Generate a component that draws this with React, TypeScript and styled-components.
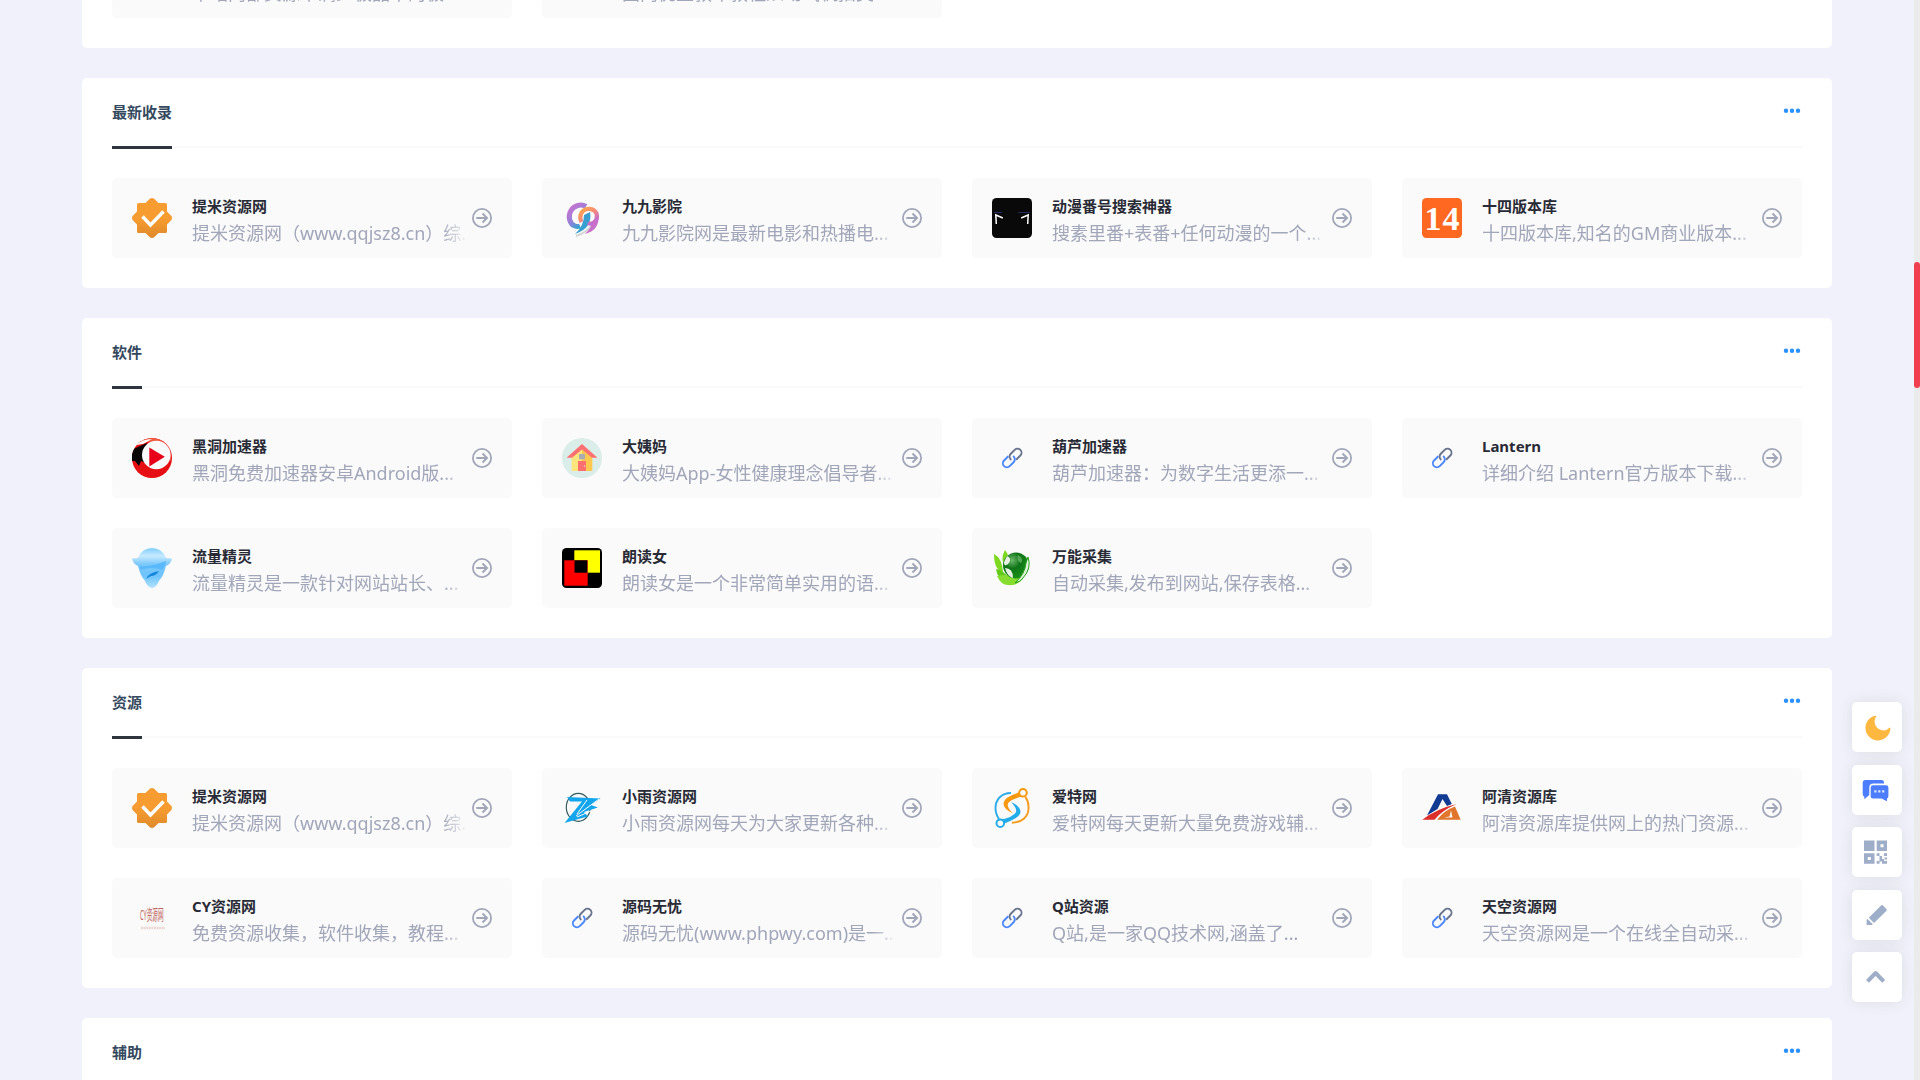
import React from "react";
import styled, { createGlobalStyle } from "styled-components";

const GlobalStyle = createGlobalStyle`
  * { box-sizing: border-box; }
  body {
    margin: 0;
    background: #f0f1fa;
    font-family: "Noto Sans", "Noto Sans CJK SC", sans-serif;
  }
`;

const Page = styled.div`
  display: flex;
  height: 1080px;
  overflow: hidden;
  background: #f0f1fa;
`;

const Main = styled.main`
  display: flex;
  flex-direction: column;
  gap: 30px;
  width: 1750px;
  margin-left: 82px;
`;

const Panel = styled.section`
  flex: none;
  padding: 0 30px 30px;
  border-radius: 5px;
  background: #fff;
`;

const ScrolledPanel = styled(Panel)`
  display: flex;
  flex-direction: column;
  justify-content: flex-end;
  height: 48px;
  border-radius: 0 0 5px 5px;
  overflow: hidden;
`;

const Header = styled.header`
  display: flex;
  justify-content: space-between;
  height: 70px;
  margin-bottom: 30px;
  border-bottom: 2px solid #fafafa;
`;

const Heading = styled.h2`
  height: 71px;
  margin: 0;
  border-bottom: 3px solid #2f353f;
  color: #34495e;
  font-size: 15px;
  font-weight: 700;
  line-height: 69px;
`;

const MoreLink = styled.a`
  display: flex;
  align-items: center;
  height: 65px;
  padding-right: 1px;
`;

const Grid = styled.div`
  display: grid;
  flex: none;
  grid-template-columns: repeat(4, 400px);
  gap: 30px;
`;

const Card = styled.article`
  display: flex;
  align-items: center;
  height: 80px;
  padding: 0 20px;
  border-radius: 5px;
  background: #fafafa;
`;

const Logo = styled.svg`
  flex: none;
  width: 40px;
  height: 40px;
`;

const Info = styled.div`
  flex: none;
  width: 280px;
  height: 80px;
  margin-left: 20px;
  padding-top: 18px;
`;

const Name = styled.h3`
  height: 20px;
  margin: 0;
  color: #282a35;
  font-size: 15px;
  font-weight: 700;
  line-height: 20px;
  white-space: nowrap;
`;

const Description = styled.p`
  height: 28px;
  margin: 3px 0 0;
  color: #a1a6b9;
  font-size: 18px;
  font-weight: 400;
  line-height: 28px;
  white-space: nowrap;
  mask-image: linear-gradient(90deg, #000 250px, transparent 275px);
`;

const Arrow = styled.svg`
  flex: none;
  width: 20px;
  height: 20px;
`;

const Tools = styled.nav`
  display: flex;
  flex-direction: column;
  gap: 12.5px;
  margin: 702px 0 0 20px;
`;

const ToolButton = styled.button`
  width: 50px;
  height: 50px;
  padding: 0;
  border: 0;
  border-radius: 5px;
  background: #fff;
  box-shadow: 0 0 15px rgba(60, 60, 40, 0.1);

  svg {
    display: block;
    width: 50px;
    height: 50px;
  }
`;

const ScrollTrack = styled.div`
  width: 6px;
  height: 1080px;
  margin-left: auto;
  padding-top: 262px;
  background: #ebebeb;
`;

const ScrollThumb = styled.div`
  height: 126px;
  border-radius: 3px;
  background: #f04050;
`;

const logos: Record<string, React.ReactNode> = {
  badge: (
    <>
      <defs>
        <linearGradient id="amber" x1="0" y1="0" x2="0" y2="1">
          <stop offset="0.5" stopColor="#f79c30" />
          <stop offset="1" stopColor="#de8a2b" />
        </linearGradient>
      </defs>
      <path
        fill="url(#amber)"
        d="M17.8 0.8Q20-0.8 22.2 0.8L26.5 5H33.5Q35 5 35 6.5V13.5L39.2 17.8Q40.8 20 39.2 22.2L35 26.5V33.5Q35 35 33.5 35H26.5L22.2 39.2Q20 40.8 17.8 39.2L13.5 35H6.5Q5 35 5 33.5V26.5L.8 22.2Q-.8 20 .8 17.8L5 13.5V6.5Q5 5 6.5 5H13.5Z"
      />
      <path d="M10.5 18.5L18.5 27L31.5 13.5" fill="none" stroke="#fff" strokeWidth="3.4" />
    </>
  ),
  nines: (
    <>
      <defs>
        <linearGradient id="violet" x1="0" y1="0" x2="0.7" y2="1">
          <stop offset="0" stopColor="#cc72cc" />
          <stop offset="0.55" stopColor="#9a7fda" />
          <stop offset="1" stopColor="#2fa5cf" />
        </linearGradient>
        <linearGradient id="sunset" x1="0" y1="0" x2="0.8" y2="1">
          <stop offset="0" stopColor="#ffa94a" />
          <stop offset="0.5" stopColor="#f78a78" />
          <stop offset="1" stopColor="#b96be0" />
        </linearGradient>
      </defs>
      <path d="M14 38Q24 35 30 27" fill="none" stroke="#d2d2d2" strokeWidth="2" />
      <path
        d="M24 8.500C19 5.500 12 7.500 9 12.500C5.500 18.500 7.500 26 13 28Q15.500 29 18 28"
        fill="none" stroke="url(#violet)" strokeWidth="5"
      />
      <path d="M28 14Q31 30 13 36Q22 28 22 17Z" fill="#399fd0" />
      <path
        d="M19.500 24C16.500 18 19.500 12 25 11C32 10 36.500 15 34.500 21C33 25 29 26.500 26 25"
        fill="none" stroke="url(#sunset)" strokeWidth="4.200"
      />
      <path d="M36.500 18Q37.500 32 23 36Q29 30 31 24Z" fill="#c86fc9" />
    </>
  ),
  eyes: (
    <>
      <rect width="40" height="40" rx="4.5" fill="#090909" />
      <path d="M2 14.500H10M26 14.500H38" stroke="#252b5c" strokeWidth="1.2" />
      <path d="M4.300 26L3.800 17L10.800 20M35.700 26L36.200 17L29.200 20" fill="none" stroke="#fff" strokeWidth="1.5" />
    </>
  ),
  fourteen: (
    <>
      <rect width="40" height="40" rx="4.5" fill="#ff6820" />
      <text x="20" y="32" textAnchor="middle" fill="#fff" fontFamily="Liberation Serif, serif" fontWeight="700" fontSize="34" textLength="35">14</text>
    </>
  ),
  play: (
    <>
      <circle cx="20" cy="20" r="20" fill="#e60f14" />
      <path d="M4 8A20 20 0 0 1 33 5Q40 12 38.500 24L34 7Q18 0 4 8" fill="#f05a40" />
      <path d="M2.500 10.500L15 5L14 25L9 23L7 28L3 23L0 23Q-1 15 2.500 10.500Z" fill="#0a0606" />
      <path d="M4 7Q10 1 20 1Q15 4 11 6Z" fill="#fafafa" />
      <circle cx="24.300" cy="17" r="14.300" fill="#fafafa" />
      <path d="M17.300 9.500L32.800 18.800L17.300 28.500Z" fill="#e8001b" />
    </>
  ),
  house: (
    <>
      <circle cx="20" cy="20" r="20" fill="#dbede8" />
      <path d="M9.700 17L20 9V33H9.700Z" fill="#ffe67c" />
      <path d="M30.300 17L20 9V33H30.300Z" fill="#ffc84f" />
      <path d="M4.500 19.700L20 6L35.500 19.700H30L20 11.500L10 19.700Z" fill="#ff7072" />
      <path d="M17 16H23V21.300H17Z" fill="#acabb1" />
      <path d="M16 23H24V33H16Z" fill="#ff6f70" />
      <circle cx="22.500" cy="28" r=".8" fill="#ffd7b0" />
    </>
  ),
  sprite: (
    <>
      <defs>
        <linearGradient id="sky" x1="0" y1="0" x2="0" y2="1">
          <stop offset="0" stopColor="#7fcffb" />
          <stop offset="0.2" stopColor="#c8ebff" />
          <stop offset="0.4" stopColor="#7cc9fb" />
          <stop offset="0.7" stopColor="#6dc3fb" />
          <stop offset="1" stopColor="#b4e4fd" />
        </linearGradient>
      </defs>
      <path d="M0 10.500L6 10Q10 0 20 0Q30 0 34 10L40 10.500Q39 16 34 18Q32 27 27 33Q24 40 20 40Q16 40 13 33Q8 27 6 18Q1 16 0 10.500Z" fill="url(#sky)" />
      <path d="M7 18Q20 19 34 13Q33 19 30 22Q20 18 9 22Z" fill="#5ab9fa" />
      <path d="M14 31Q16 25 27 23Q24 28 19 28Z" fill="#1685dc" />
    </>
  ),
  blocks: (
    <>
      <rect width="40" height="40" rx="4.500" fill="#000" />
      <path d="M12.300 2.300H38V24.700H12.300Z" fill="#ff0" />
      <path d="M2.300 12.300H25.700V37.700H2.300Z" fill="#f00" />
      <path d="M12.500 12.300H25.300V24.700H12.500Z" fill="#000" />
    </>
  ),
  globe: (
    <>
      <defs>
        <radialGradient id="leafglobe" cx="0.35" cy="0.3" r="0.8">
          <stop offset="0" stopColor="#6db96a" />
          <stop offset="0.4" stopColor="#0f7417" />
          <stop offset="1" stopColor="#1c9618" />
        </radialGradient>
      </defs>
      <path d="M2 6Q10 10 11 24Q2 22 2 6ZM13 2Q19 8 15 20Q7 12 13 2Z" fill="#7cd91f" />
      <path d="M4 21Q12 22 17 31Q6 34 4 21Z" fill="#63cb18" />
      <path d="M5 28Q18 25 31 31Q25 38 16 37Q9 37 5 28Z" fill="#86dc2f" />
      <circle cx="24" cy="17.500" r="13" fill="url(#leafglobe)" />
      <path d="M15 8Q20 10 17 15Q12 20 12 14ZM13 20Q21 20 21 30Q15 28 13 20Z" fill="#e6efe2" />
      <path d="M26 7Q32 10 29 15Q24 12 26 7Z" fill="#56a859" />
      <path d="M36 9Q40 20 31 30Q28 34 23 35Q33 26 34 15Z" fill="#dff3db" stroke="#27a21b" strokeWidth="1" />
    </>
  ),
  cy: (
    <>
      <text textLength="40" lengthAdjust="spacingAndGlyphs" fill="#bd6259" fontSize="14" transform="translate(8 21.500) scale(.59 1.050)">CY资源网</text>
      <path d="M9 30H33" stroke="#ecd6d4" strokeWidth="2.500" strokeDasharray="2 .6" />
    </>
  ),
  bolt: (
    <>
      <ellipse cx="16.300" cy="19.300" rx="12" ry="14" fill="none" stroke="#32595b" strokeWidth="1.200" />
      <path
        d="M5 9L38.500 10.500L29 17L36 19.500L22 24L26 28.500L13 32L2.500 35L20 13.500H8Z"
        fill="#14a6ec"
      />
      <path d="M37 11L14 28M36 20L15 29M25 12L15 26" stroke="#fafafa" strokeWidth="1" />
    </>
  ),
  orbit: (
    <g fill="none">
      <path d="M19 5C9 5 3.500 12 3.500 20Q3.500 26 7 31" stroke="#2bace8" strokeWidth="1.900" />
      <path d="M33.500 9Q37 14 36.500 21C36 29 30 34.500 20 34.700" stroke="#f59a1b" strokeWidth="1.900" />
      <path d="M28 4Q12 9 11.500 15Q11 21 21 25.500Q14.500 19 16 15.500Q18 11 33 8Z" fill="#f7980e" />
      <path d="M19 14Q28.500 18 28.500 24Q28 30 11 36L7 32Q22 29 24 24Q25 20 19 14Z" fill="#22ace9" />
      <circle cx="31" cy="4.800" r="3.800" fill="#fafafa" stroke="#f7980e" strokeWidth="2" />
      <circle cx="8.300" cy="35.200" r="3.800" fill="#fafafa" stroke="#22ace9" strokeWidth="2" />
    </g>
  ),
  road: (
    <>
      <path d="M16 6.300H25L29.800 16L25 18L20.500 11L15.500 21L5 27.500Z" fill="#113a92" />
      <path d="M34.500 16Q14 21 .3 31.700H12.500Q19 23 34.500 16Z" fill="#dc2f2b" />
      <path d="M33 18.500L38.700 31.700H15Q22 22.500 33 18.500Z" fill="#e0752c" />
      <path d="M29 22.500L30.500 29.500H22L27.500 28.500Z" fill="#fafafa" />
    </>
  ),
  link: (
    <g transform="translate(20.200 20) rotate(-45)" fill="none" strokeWidth="1.900">
      <path d="M1.500 4H7.500A4 4 0 0 0 7.500-4H2A4 4 0 0 0-2 .8" stroke="#69748c" />
      <path d="M-1.500-4H-7.500A4 4 0 0 0-7.500 4H-2A4 4 0 0 0 2-.8" stroke="#4a87ff" />
    </g>
  ),
};

interface Site {
  logo: string;
  name: string;
  text: string;
}

const sections: { title: string; sites: Site[] }[] = [
  {
    title: "最新收录",
    sites: [
      { logo: "badge", name: "提米资源网", text: "提米资源网（www.qqjsz8.cn）综..." },
      { logo: "nines", name: "九九影院", text: "九九影院网是最新电影和热播电..." },
      { logo: "eyes", name: "动漫番号搜索神器", text: "搜素里番+表番+任何动漫的一个..." },
      { logo: "fourteen", name: "十四版本库", text: "十四版本库,知名的GM商业版本..." },
    ],
  },
  {
    title: "软件",
    sites: [
      { logo: "play", name: "黑洞加速器", text: "黑洞免费加速器安卓Android版..." },
      { logo: "house", name: "大姨妈", text: "大姨妈App-女性健康理念倡导者..." },
      { logo: "link", name: "葫芦加速器", text: "葫芦加速器：为数字生活更添一..." },
      { logo: "link", name: "Lantern", text: "详细介绍 Lantern官方版本下载..." },
      { logo: "sprite", name: "流量精灵", text: "流量精灵是一款针对网站站长、..." },
      { logo: "blocks", name: "朗读女", text: "朗读女是一个非常简单实用的语..." },
      { logo: "globe", name: "万能采集", text: "自动采集,发布到网站,保存表格..." },
    ],
  },
  {
    title: "资源",
    sites: [
      { logo: "badge", name: "提米资源网", text: "提米资源网（www.qqjsz8.cn）综..." },
      { logo: "bolt", name: "小雨资源网", text: "小雨资源网每天为大家更新各种..." },
      { logo: "orbit", name: "爱特网", text: "爱特网每天更新大量免费游戏辅..." },
      { logo: "road", name: "阿清资源库", text: "阿清资源库提供网上的热门资源..." },
      { logo: "cy", name: "CY资源网", text: "免费资源收集，软件收集，教程..." },
      { logo: "link", name: "源码无忧", text: "源码无忧(www.phpwy.com)是一..." },
      { logo: "link", name: "Q站资源", text: "Q站,是一家QQ技术网,涵盖了..." },
      { logo: "link", name: "天空资源网", text: "天空资源网是一个在线全自动采..." },
    ],
  },
  { title: "辅助", sites: [] },
];

const scrolledTexts = ["中站内部资源丰满少极品中的极", "国内优型教车教程从动气机拍美"];

const SiteCard = ({ site }: { site: Site }) => (
  <Card>
    <Logo viewBox="0 0 40 40">{logos[site.logo]}</Logo>
    <Info>
      <Name>{site.name}</Name>
      <Description>{site.text}</Description>
    </Info>
    <Arrow viewBox="0 0 20 20" fill="none" stroke="#a1a6b9" strokeWidth="1.8">
      <circle cx="10" cy="10" r="9.1" />
      <path d="M4.300 10H15M10.500 5.500L15 10L10.500 14.500" strokeWidth="2" />
    </Arrow>
  </Card>
);

const Moon = () => (
  <svg viewBox="0 0 50 50">
    <path d="M24.500 14C20 20 24 28.500 32 28.500Q35 28.500 37.500 25.500Q38.800 25.500 38.300 28C37 34 32 38.400 26 38.400C19 38.400 13.500 33 13.500 26C13.500 20 17.500 15 23.500 13.800Z" fill="#ffb83f" />
  </svg>
);

const Chat = () => (
  <svg viewBox="0 0 50 50">
    <path d="M13 15H29.500Q32 15 32 17.500V18.500H21.500Q17.300 18.500 17.300 22.500V30L12.300 34.300V31.500Q10.700 31 10.700 29V17.500Q10.700 15 13 15Z" fill="#4d7dff" />
    <path d="M21 20.300H34Q36.400 20.300 36.400 22.600V31Q36.400 33 35 33.500V36.300L29.500 33.500H21Q18.700 33.500 18.700 31.200V22.600Q18.700 20.300 21 20.300Z" fill="#4d7dff" />
    <path d="M22.300 25.300H24.500V27.500H22.300ZM26.200 25.300H28.400V27.500H26.200ZM30.100 25.300H32.300V27.500H30.100Z" fill="#dce6ff" />
  </svg>
);

const QrCode = () => (
  <svg viewBox="0 0 50 50" fill="#9eadc8" fillRule="evenodd">
    <path d="M12 13.500H22.500V24H12ZM24.700 13.500H35V24H24.700ZM28.500 17.300V20.300H31.500V17.300ZM12 26.300H22.500V36.700H12ZM15.800 30V33H18.800V30Z" />
    <path d="M24.700 26.300H27.500V29H24.700ZM32 26.300H35V29H32ZM27.500 29H30V32H32V34H35V36.700H30V34.500H27.500V36.700H24.700V34H27.500ZM32.500 30.500H35V32.500H32.500Z" />
  </svg>
);

const Pencil = () => (
  <svg viewBox="0 0 50 50" fill="#9eadc8">
    <path d="M29.300 15.300Q30 14.700 30.800 15.300L34.500 19.200Q35 20 34.500 20.700L22 33L16.800 27.800ZM15.600 29L20.800 34.300L20 35H14.600V29.800Z" />
  </svg>
);

const Chevron = () => (
  <svg viewBox="0 0 50 50" fill="none" stroke="#9eadc8" strokeWidth="4" strokeLinejoin="round">
    <path d="M15.500 29.300L23.600 21L31.700 29.300" />
  </svg>
);

const tools = [
  { id: "night", Icon: Moon },
  { id: "chat", Icon: Chat },
  { id: "qrcode", Icon: QrCode },
  { id: "submit", Icon: Pencil },
  { id: "top", Icon: Chevron },
];

export default function App() {
  return (
    <>
      <GlobalStyle />
      <Page>
        <Main>
          <ScrolledPanel>
            <Grid>
              {scrolledTexts.map((text) => (
                <Card key={text}>
                  <Logo />
                  <Info>
                    <Name />
                    <Description>{text}</Description>
                  </Info>
                </Card>
              ))}
            </Grid>
          </ScrolledPanel>
          {sections.map(({ title, sites }) => (
            <Panel key={title}>
              <Header>
                <Heading>{title}</Heading>
                <MoreLink>
                  <svg width="18" height="6" viewBox="0 0 18 6" fill="#2a90ff">
                    <circle cx="3" cy="2.700" r="2.200" />
                    <circle cx="9" cy="2.700" r="2.200" />
                    <circle cx="15" cy="2.700" r="2.200" />
                  </svg>
                </MoreLink>
              </Header>
              <Grid>
                {sites.map((site) => (
                  <SiteCard key={site.name} site={site} />
                ))}
              </Grid>
            </Panel>
          ))}
        </Main>
        <Tools>
          {tools.map(({ id, Icon }) => (
            <ToolButton key={id}>
              <Icon />
            </ToolButton>
          ))}
        </Tools>
        <ScrollTrack>
          <ScrollThumb />
        </ScrollTrack>
      </Page>
    </>
  );
}
